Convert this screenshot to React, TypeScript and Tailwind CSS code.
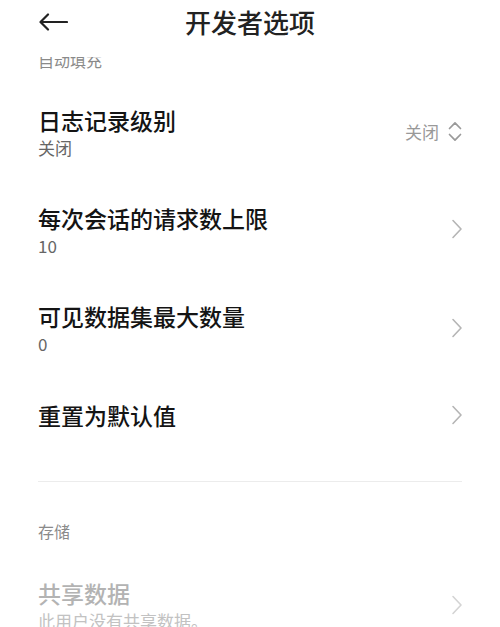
import React from "react";

const font = { fontFamily: '"Noto Sans CJK SC", "Noto Sans", sans-serif' };

function ChevronRight({ light }: { light?: boolean }) {
  return (
    <svg width="12" height="20" viewBox="0 0 12 20" fill="none" className={light ? "text-[#d4d4d4]" : "text-[#b5b5b5]"}>
      <path d="M2 1.5 L10 10 L2 18.5" stroke="currentColor" strokeWidth="1.6" strokeLinecap="round" strokeLinejoin="round" />
    </svg>
  );
}

function UpDown() {
  return (
    <svg width="14" height="21" viewBox="0 0 14 21" fill="none" className="text-[#9a9a9a]">
      <path d="M1.5 7.5 L7 1.8 L12.5 7.5" stroke="currentColor" strokeWidth="1.7" strokeLinecap="round" strokeLinejoin="round" />
      <path d="M1.5 13.5 L7 19.2 L12.5 13.5" stroke="currentColor" strokeWidth="1.7" strokeLinecap="round" strokeLinejoin="round" />
    </svg>
  );
}

type Row = { title: string; sub?: string; h: string };

const rows: Row[] = [
  { title: "每次会话的请求数上限", sub: "10", h: "h-[98px]" },
  { title: "可见数据集最大数量", sub: "0", h: "h-[99px]" },
  { title: "重置为默认值", h: "h-[76px]" },
];

export default function App() {
  return (
    <div className="w-[500px] h-[627px] overflow-hidden bg-white" style={font}>
      <div className="h-[57px] flex items-center relative px-[38px]">
        <svg width="30" height="18" viewBox="0 0 30 18" fill="none" className="-mt-[14px] text-[#222]">
          <path d="M29 9 H3 M10 1.5 L2.5 9 L10 16.5" stroke="currentColor" strokeWidth="2.2" strokeLinecap="round" strokeLinejoin="round" />
        </svg>
        <div className="flex-1 text-center -mt-[14px] pr-[30px] text-[26px] leading-[34px] font-medium text-[#222]">开发者选项</div>
      </div>

      <div className="h-[25px] overflow-hidden px-[38px]">
        <div className="-mt-[8px] text-[16px] leading-[22px] text-[#8a8a8a]">自动填充</div>
      </div>

      <div className="h-[98px] flex items-center justify-between px-[38px]">
        <div>
          <div className="text-[23px] leading-[32px] font-medium text-[#141414]">日志记录级别</div>
          <div className="text-[17px] leading-[23px] text-[#666]">关闭</div>
        </div>
        <div className="flex items-center gap-[9px]">
          <span className="text-[17px] leading-[23px] text-[#999]">关闭</span>
          <UpDown />
        </div>
      </div>

      {rows.map((r) => (
        <div key={r.title} className={`${r.h} flex items-center justify-between pl-[38px] pr-[37px]`}>
          <div>
            <div className="text-[23px] leading-[32px] font-medium text-[#141414]">{r.title}</div>
            {r.sub && <div className="text-[17px] leading-[23px] text-[#666]">{r.sub}</div>}
          </div>
          <ChevronRight />
        </div>
      ))}

      <div className="mx-[38px] mt-[28px] border-t border-[#ececec]" />

      <div className="mt-[38px] px-[38px] text-[16px] leading-[22px] text-[#8a8a8a]">存储</div>

      <div className="mt-[35px] flex items-center justify-between pl-[38px] pr-[37px]">
        <div>
          <div className="text-[23px] leading-[32px] font-medium text-[#b3b3b3]">共享数据</div>
          <div className="text-[17px] leading-[23px] text-[#c2c2c2]">此用户没有共享数据。</div>
        </div>
        <ChevronRight light />
      </div>
    </div>
  );
}
